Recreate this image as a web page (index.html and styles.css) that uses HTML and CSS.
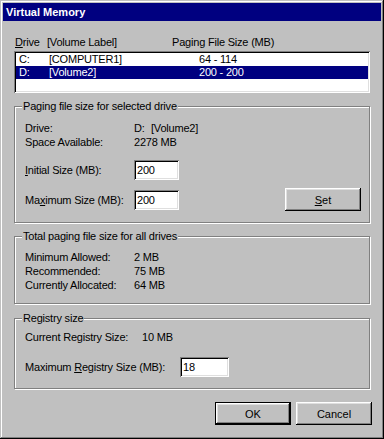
FILE: index.html
```html
<!DOCTYPE html>
<html>
<head>
<meta charset="utf-8">
<link rel="stylesheet" href="styles.css">
</head>
<body>
<div class="window">
  <div class="titlebar">Virtual Memory</div>
  <div class="content">
    <div class="list-header">
      <span class="col-drive"><u>D</u>rive</span>
      <span class="col-label">[Volume Label]</span>
      <span>Paging File Size (MB)</span>
    </div>
    <div class="listbox">
      <div class="row"><span class="c1">C:</span><span class="c2">[COMPUTER1]</span><span>64 - 114</span></div>
      <div class="row selected"><span class="c1">D:</span><span class="c2">[Volume2]</span><span>200 - 200</span></div>
    </div>

    <div class="group g1">
      <div class="group-title">Paging file size for selected drive</div>
      <div class="info first"><span class="lbl">Drive:</span><span class="drv">D:</span><span>[Volume2]</span></div>
      <div class="info"><span class="lbl">Space Available:</span><span>2278 MB</span></div>
      <div class="field-row initial"><span class="lbl"><u>I</u>nitial Size (MB):</span><span class="field">200</span></div>
      <div class="field-row maximum"><span class="lbl">Ma<u>x</u>imum Size (MB):</span><span class="field">200</span><button class="btn set"><span><u>S</u>et</span></button></div>
    </div>

    <div class="group g2">
      <div class="group-title">Total paging file size for all drives</div>
      <div class="info first"><span class="lbl">Minimum Allowed:</span><span>2 MB</span></div>
      <div class="info"><span class="lbl">Recommended:</span><span>75 MB</span></div>
      <div class="info"><span class="lbl">Currently Allocated:</span><span>64 MB</span></div>
    </div>

    <div class="group g3">
      <div class="group-title">Registry size</div>
      <div class="info first"><span class="lbl lbl-cur">Current Registry Size:</span><span>10 MB</span></div>
      <div class="field-row registry"><span class="lbl lbl-max">Maximum <u>R</u>egistry Size (MB):</span><span class="field field-reg">18</span></div>
    </div>

    <div class="buttons">
      <button class="btn default">OK</button>
      <button class="btn">Cancel</button>
    </div>
  </div>
</div>
</body>
</html>
```

FILE: styles.css
```css
* { box-sizing: border-box; }
html, body { margin: 0; padding: 0; }
body {
  width: 384px;
  height: 439px;
  overflow: hidden;
  background: #c0c0c0;
  font-family: "Liberation Sans", Arial, sans-serif;
  font-size: 11px;
  letter-spacing: -0.2px;
  color: #000;
}
u { text-underline-offset: 1px; }

.window {
  width: 384px;
  height: 439px;
  padding: 3px;
  background: #c0c0c0;
  box-shadow: inset -1px -1px #000, inset 1px 1px #c0c0c0, inset -2px -2px #808080, inset 2px 2px #fff;
  display: flex;
  flex-direction: column;
}
.titlebar {
  height: 18px;
  line-height: 18px;
  padding-left: 3px;
  background: #000080;
  color: #fff;
  font-weight: bold;
  letter-spacing: 0;
}
.content {
  padding: 0 11px;
  display: flex;
  flex-direction: column;
}

.list-header {
  margin-top: 15px;
  height: 13px;
  line-height: 13px;
  display: flex;
  padding-left: 1px;
  white-space: nowrap;
}
.col-drive { width: 32px; }
.col-label { width: 125px; }

.listbox, .field {
  background: #fff;
  box-shadow: inset 1px 1px #808080, inset -1px -1px #fff, inset 2px 2px #000, inset -2px -2px #dfdfdf;
}
.listbox {
  margin-top: 2px;
  height: 42px;
  padding: 2px;
}
.row {
  height: 13px;
  line-height: 13px;
  display: flex;
  padding-left: 3px;
  white-space: nowrap;
}
.row.selected { background: #000080; color: #fff; }
.c1 { width: 30px; }
.c2 { width: 150px; }

.group {
  border: 1px solid #808080;
  box-shadow: 1px 1px 0 #fff, inset 1px 1px 0 #fff;
  padding: 0 8px 11px 10px;
}
.g1 { margin-top: 13px; }
.g2 { margin-top: 13px; }
.g3 { margin-top: 14px; }
.group-title {
  display: table;
  margin: -7px 0 0 -3px;
  padding: 0 1px;
  height: 13px;
  line-height: 13px;
  background: #c0c0c0;
  white-space: nowrap;
}
.info {
  height: 14px;
  line-height: 14px;
  display: flex;
  white-space: nowrap;
}
.g1 .info.first { margin-top: 8px; }
.g2 .info.first { margin-top: 7px; }
.g3 .info.first { margin-top: 5px; }
.lbl { width: 109px; flex: none; }
.lbl-cur { width: 117px; }
.lbl-max { width: 155px; }
.drv { width: 17px; }

.field-row {
  display: flex;
  align-items: center;
  white-space: nowrap;
}
.initial { margin-top: 11px; height: 20px; }
.maximum { margin-top: 8px; height: 23px; }
.registry { margin-top: 13px; height: 20px; }
.field {
  width: 45px;
  height: 20px;
  line-height: 20px;
  padding-left: 3px;
}
.field-reg { width: 49px; }

.btn {
  font: inherit;
  color: #000;
  border: none;
  margin: 0;
  padding: 0;
  width: 76px;
  height: 23px;
  background: #c0c0c0;
  box-shadow: inset -1px -1px #000, inset 1px 1px #fff, inset -2px -2px #808080, inset 2px 2px #dfdfdf;
  display: flex;
  align-items: center;
  justify-content: center;
}
.btn.default {
  box-shadow: inset 0 0 0 1px #000, inset -2px -2px #000, inset 2px 2px #fff, inset -3px -3px #808080, inset 3px 3px #dfdfdf;
}
.set { margin-left: auto; }
.buttons {
  display: flex;
  justify-content: flex-end;
  gap: 5px;
  margin-top: 13px;
  margin-right: -2px;
}
```
